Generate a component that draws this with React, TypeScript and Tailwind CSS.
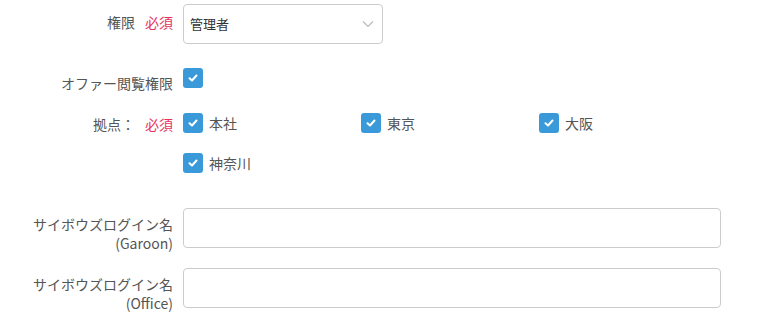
const FONT = "font-['Noto_Sans_CJK_JP','Noto_Sans',sans-serif]";

const CheckBox = ({ label }: { label?: string }) => (
  <label className="flex items-center gap-[6px] h-[20px]">
    <span className="w-[20px] h-[20px] shrink-0 rounded-[3px] bg-[#3a9ad9] flex items-center justify-center">
      <svg width="10" height="8" viewBox="0 0 10 8" fill="none" aria-hidden="true">
        <path d="M1.5 4.2 L4 6.5 L8.5 1.5" stroke="white" strokeWidth="2" strokeLinecap="round" strokeLinejoin="round" />
      </svg>
    </span>
    {label && <span className="text-[14px] leading-[20px] text-[#555]">{label}</span>}
  </label>
);

const Required = () => <span className="text-[#e8335f] ml-[10px]">必須</span>;

const TextRow = ({ sub, className = "" }: { sub: string; className?: string }) => (
  <div className={`flex items-start h-[40px] ${className}`}>
    <div className="w-[183px] pr-[10px] text-right leading-[19px] pt-[7px]">
      サイボウズログイン名
      <br />
      {sub}
    </div>
    <input className="w-[538px] h-[40px] border border-[#ccc] rounded-[4px] outline-none px-2" />
  </div>
);

export default function App() {
  return (
    <div className={`w-[771px] h-[322px] bg-white text-[14px] text-[#555] ${FONT}`}>
      <div className="flex items-center pt-[4px]">
        <div className="w-[183px] pr-[10px] text-right leading-[20px] pb-[4px]">
          権限<Required />
        </div>
        <div className="w-[200px] h-[40px] border border-[#ccc] rounded-[4px] flex items-center justify-between pl-[6px] pr-[8px]">
          <span className="text-[13px] text-[#333]">管理者</span>
          <svg width="12" height="8" viewBox="0 0 12 8" fill="none" aria-hidden="true">
            <path d="M1 1.5 L6 6.5 L11 1.5" stroke="#bbb" strokeWidth="1.2" />
          </svg>
        </div>
      </div>

      <div className="flex items-start mt-[24px]">
        <div className="w-[183px] pr-[10px] text-right leading-[20px] pt-[5px]">オファー閲覧権限</div>
        <CheckBox />
      </div>

      <div className="flex items-start mt-[20px]">
        <div className="w-[183px] pr-[10px] text-right leading-[20px] pt-[1px]">
          拠点：<Required />
        </div>
        <div className="grid grid-cols-[178px_178px_178px] gap-y-[20px]">
          <CheckBox label="本社" />
          <CheckBox label="東京" />
          <CheckBox label="大阪" />
          <CheckBox label="神奈川" />
        </div>
      </div>

      <TextRow sub="(Garoon)" className="mt-[35px]" />
      <TextRow sub="(Office)" className="mt-[20px]" />
    </div>
  );
}
